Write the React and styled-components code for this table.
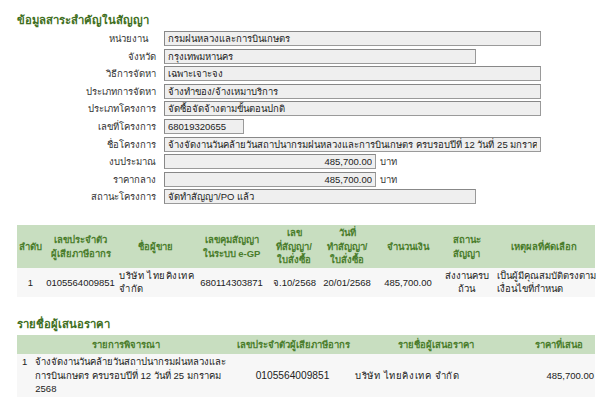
import styled, { createGlobalStyle } from "styled-components";

const GlobalStyle = createGlobalStyle`
    body{
        margin:0;
        background:#ffffff;
        font-family:Tahoma, "Liberation Sans", "Noto Sans", sans-serif;
        font-size:9.5px;
        color:#222;
    }
`;

const Page = styled.div`
    width:580px;
    padding:12px 0 0 17px;
`;

const SectionTitle = styled.div`
    font-size:11.3px;
    font-weight:bold;
    color:#3f6f22;
    line-height:16px;
    margin-top:${(p) => p.$top || 0}px;
`;

const Form = styled.div`
    display:grid;
    grid-template-columns:139px 1fr;
    column-gap:8px;
    row-gap:2.6px;
    margin-top:3px;
`;

const Label = styled.div`
    text-align:right;
    line-height:15px;
    white-space:nowrap;
    color:#333;
    padding-right:${(p) => p.$pad || 0}px;
`;

const Field = styled.div`
    display:flex;
    align-items:center;
    gap:4px;
`;

const Box = styled.input`
    box-sizing:border-box;
    width:${(p) => p.$w}px;
    height:15px;
    padding:0 3px;
    margin:0;
    border:1px solid #9a9a9a;
    border-top-color:#888;
    border-left-color:#888;
    background:#efefef;
    font-family:inherit;
    font-size:9.5px;
    color:#222;
    text-align:${(p) => (p.$right ? "right" : "left")};
    outline:none;
`;

const Unit = styled.span`
    color:#333;
`;

const Table = styled.table`
    width:578px;
    border-collapse:collapse;
    table-layout:fixed;
    margin-top:${(p) => p.$top || 0}px;
`;

const Th = styled.th`
    background:#c8dec0;
    color:#4a7d2c;
    font-weight:bold;
    font-size:9.5px;
    line-height:13.5px;
    padding:${(p) => p.$pad || "1px 2px"};
    text-align:center;
    vertical-align:middle;
    white-space:nowrap;
`;

const Td = styled.td`
    background:#f7f7f7;
    font-size:${(p) => p.$size || 9.5}px;
    line-height:13.5px;
    letter-spacing:${(p) => p.$spread || 0}px;
    padding:${(p) => p.$pad || "0 2px"};
    text-align:${(p) => p.$align || "center"};
    vertical-align:middle;
    white-space:nowrap;
    color:#222;
`;

const ItemCell = styled.div`
    display:flex;
    gap:8px;
    padding:1px 0 1px 5px;
`;

const formRows = [
    { label: "หน่วยงาน", value: "กรมฝนหลวงและการบินเกษตร", w: 377, pad: 8 },
    { label: "จังหวัด", value: "กรุงเทพมหานคร", w: 312 },
    { label: "วิธีการจัดหา", value: "เฉพาะเจาะจง", w: 377 },
    { label: "ประเภทการจัดหา", value: "จ้างทำของ/จ้างเหมาบริการ", w: 377 },
    { label: "ประเภทโครงการ", value: "จัดซื้อจัดจ้างตามขั้นตอนปกติ", w: 377 },
    { label: "เลขที่โครงการ", value: "68019320655", w: 80 },
    { label: "ชื่อโครงการ", value: "จ้างจัดงานวันคล้ายวันสถาปนากรมฝนหลวงและการบินเกษตร ครบรอบปีที่ 12 วันที่ 25 มกราคม 2568", w: 377 },
    { label: "งบประมาณ", value: "485,700.00", w: 212, money: true },
    { label: "ราคากลาง", value: "485,700.00", w: 212, money: true },
    { label: "สถานะโครงการ", value: "จัดทำสัญญา/PO แล้ว", w: 312 },
];

const App = () => {
    return (
        <Page>
            <GlobalStyle />
            <SectionTitle>ข้อมูลสาระสำคัญในสัญญา</SectionTitle>
            <Form>
                {formRows.map((r) => (
                    <>
                        <Label key={r.label} $pad={r.pad}>{r.label}</Label>
                        <Field key={r.label + "f"}>
                            <Box readOnly value={r.value} $w={r.w} $right={r.money} />
                            {r.money && <Unit>บาท</Unit>}
                        </Field>
                    </>
                ))}
            </Form>

            <Table $top={21}>
                <colgroup>
                    <col style={{ width: 27 }} />
                    <col style={{ width: 73 }} />
                    <col style={{ width: 76 }} />
                    <col style={{ width: 77 }} />
                    <col style={{ width: 48 }} />
                    <col style={{ width: 58 }} />
                    <col style={{ width: 64 }} />
                    <col style={{ width: 53 }} />
                    <col style={{ width: 102 }} />
                </colgroup>
                <thead>
                    <tr>
                        <Th $pad="1px 0">ลำดับ</Th>
                        <Th>เลขประจำตัว<br />ผู้เสียภาษีอากร</Th>
                        <Th>ชื่อผู้ขาย</Th>
                        <Th>เลขคุมสัญญา<br />ในระบบ e-GP</Th>
                        <Th>เลข<br />ที่สัญญา/<br />ใบสั่งซื้อ</Th>
                        <Th>วันที่<br />ทำสัญญา/<br />ใบสั่งซื้อ</Th>
                        <Th>จำนวนเงิน</Th>
                        <Th>สถานะ<br />สัญญา</Th>
                        <Th>เหตุผลที่คัดเลือก</Th>
                    </tr>
                </thead>
                <tbody>
                    <tr>
                        <Td $pad="0 0">1</Td>
                        <Td>0105564009851</Td>
                        <Td $align="left" $spread={0.5}>บริษัท ไทยคิงเทค<br />จำกัด</Td>
                        <Td>680114303871</Td>
                        <Td $align="left" $pad="0 3px">จ.10/2568</Td>
                        <Td>20/01/2568</Td>
                        <Td>485,700.00</Td>
                        <Td>ส่งงานครบ<br />ถ้วน</Td>
                        <Td $align="left" $pad="1px 4px">เป็นผู้มีคุณสมบัติตรงตาม<br />เงื่อนไขที่กำหนด</Td>
                    </tr>
                </tbody>
            </Table>

            <SectionTitle $top={19}>รายชื่อผู้เสนอราคา</SectionTitle>
            <Table $top={3}>
                <colgroup>
                    <col style={{ width: 218 }} />
                    <col style={{ width: 115 }} />
                    <col style={{ width: 172 }} />
                    <col style={{ width: 73 }} />
                </colgroup>
                <thead>
                    <tr>
                        <Th $pad="3px 2px">รายการพิจารณา</Th>
                        <Th $pad="3px 2px">เลขประจำตัวผู้เสียภาษีอากร</Th>
                        <Th $pad="3px 2px">รายชื่อผู้เสนอราคา</Th>
                        <Th $pad="3px 2px">ราคาที่เสนอ</Th>
                    </tr>
                </thead>
                <tbody>
                    <tr>
                        <Td $align="left" $pad="0">
                            <ItemCell>
                                <span>1</span>
                                <span>จ้างจัดงานวันคล้ายวันสถาปนากรมฝนหลวงและ<br />การบินเกษตร ครบรอบปีที่ 12 วันที่ 25 มกราคม<br />2568</span>
                            </ItemCell>
                        </Td>
                        <Td $size={10.2}>0105564009851</Td>
                        <Td $align="left" $pad="0 5px" $spread={0.6}>บริษัท ไทยคิงเทค จำกัด</Td>
                        <Td $align="right" $pad="0 1px">485,700.00</Td>
                    </tr>
                </tbody>
            </Table>
        </Page>
    );
};

export default App;
